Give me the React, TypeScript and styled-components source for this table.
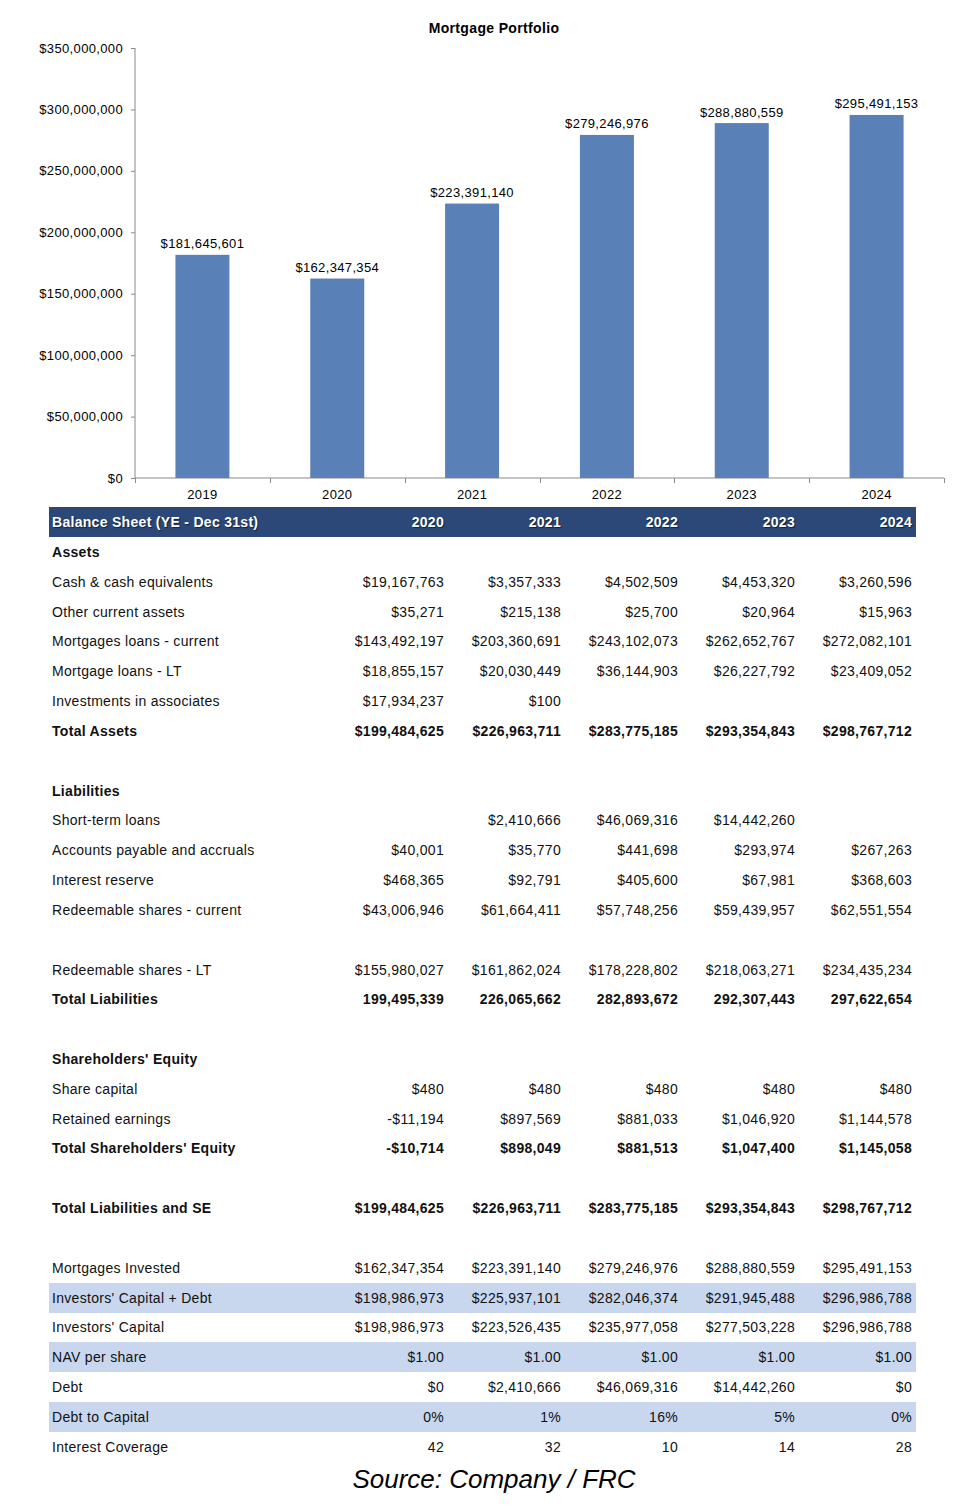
import React from 'react'
import styled, { createGlobalStyle } from 'styled-components'

const GlobalStyle = createGlobalStyle`
  body {
    margin: 0;
    background: #fff;
    font-family: Arial, "Liberation Sans", Helvetica, sans-serif;
    color: #000;
  }
`

const Page = styled.div`
  width: 960px;
  display: flex;
  flex-direction: column;
`

const ChartSvg = styled.svg`
  display: block;
  width: 960px;
  height: 507px;
  font-family: Arial, "Liberation Sans", sans-serif;
  letter-spacing: 0.35px;
`

const Table = styled.div`
  margin-left: 49px;
  width: 867px;
  display: flex;
  flex-direction: column;
`

const Row = styled.div<{ $bold?: boolean; $hl?: boolean }>`
  display: grid;
  grid-template-columns: 278px repeat(5, 117px);
  height: 29.83px;
  align-items: center;
  font-size: 14px;
  letter-spacing: 0.3px;
  font-weight: ${p => (p.$bold ? 700 : 400)};
  background: ${p => (p.$hl ? '#c8d7ee' : 'transparent')};
  color: #111;
`

const HeaderRow = styled(Row)`
  background: #2b4878;
  color: #fff;
  font-weight: 700;
  text-shadow: 1px 1px 1px rgba(0, 0, 0, 0.55);
  height: 30px;
`

const Label = styled.div`
  padding-left: 3px;
  white-space: nowrap;
`

const Value = styled.div`
  text-align: right;
  white-space: nowrap;
`

const Source = styled.div`
  height: 34px;
  line-height: 34px;
  padding-left: 28px;
  text-align: center;
  font-size: 26px;
  font-style: italic;
  color: #000;
`

const years = ['2019', '2020', '2021', '2022', '2023', '2024']
const portfolio = [181645601, 162347354, 223391140, 279246976, 288880559, 295491153]

const fmt = (n: number) => '$' + n.toLocaleString('en-US')

const AXIS_X = 135
const AXIS_RIGHT = 944
const BASE_Y = 478
const TOP_Y = 48
const MAX = 350000000
const CAT_W = (AXIS_RIGHT - AXIS_X) / 6
const BAR_W = 54

const yOf = (v: number) => BASE_Y - (v / MAX) * (BASE_Y - TOP_Y)

function PortfolioChart() {
  const ticks = [0, 50, 100, 150, 200, 250, 300, 350].map(m => m * 1000000)
  return (
    <ChartSvg viewBox="0 0 960 507">
      <text x={494} y={33} fontSize={14} fontWeight={700} textAnchor="middle">
        Mortgage Portfolio
      </text>
      <line x1={AXIS_X} y1={TOP_Y} x2={AXIS_X} y2={BASE_Y} stroke="#8a8a8a" strokeWidth={1} />
      <line x1={AXIS_X} y1={BASE_Y} x2={AXIS_RIGHT} y2={BASE_Y} stroke="#8a8a8a" strokeWidth={1} />
      {ticks.map(t => (
        <g key={t}>
          <line x1={AXIS_X - 4} y1={yOf(t) + 0.5} x2={AXIS_X} y2={yOf(t) + 0.5} stroke="#8a8a8a" />
          <text x={123} y={yOf(t) + 4.5} fontSize={13} textAnchor="end">
            {t === 0 ? '$0' : fmt(t)}
          </text>
        </g>
      ))}
      {Array.from({ length: 7 }).map((_, i) => (
        <line
          key={i}
          x1={Math.round(AXIS_X + i * CAT_W) + 0.5}
          y1={BASE_Y}
          x2={Math.round(AXIS_X + i * CAT_W) + 0.5}
          y2={BASE_Y + 5}
          stroke="#8a8a8a"
        />
      ))}
      {portfolio.map((v, i) => {
        const cx = AXIS_X + CAT_W * (i + 0.5)
        const top = yOf(v)
        return (
          <g key={years[i]}>
            <rect x={cx - BAR_W / 2} y={top} width={BAR_W} height={BASE_Y - top} fill="#5a80b8" />
            <text x={cx} y={top - 6.5} fontSize={13} textAnchor="middle">
              {fmt(v)}
            </text>
            <text x={cx} y={498.5} fontSize={13} textAnchor="middle">
              {years[i]}
            </text>
          </g>
        )
      })}
    </ChartSvg>
  )
}

type Line = { label?: string; values?: string[]; bold?: boolean; hl?: boolean }

const rows: Line[] = [
  { label: 'Assets', bold: true },
  { label: 'Cash & cash equivalents', values: ['$19,167,763', '$3,357,333', '$4,502,509', '$4,453,320', '$3,260,596'] },
  { label: 'Other current assets', values: ['$35,271', '$215,138', '$25,700', '$20,964', '$15,963'] },
  { label: 'Mortgages loans - current', values: ['$143,492,197', '$203,360,691', '$243,102,073', '$262,652,767', '$272,082,101'] },
  { label: 'Mortgage loans - LT', values: ['$18,855,157', '$20,030,449', '$36,144,903', '$26,227,792', '$23,409,052'] },
  { label: 'Investments in associates', values: ['$17,934,237', '$100', '', '', ''] },
  { label: 'Total Assets', bold: true, values: ['$199,484,625', '$226,963,711', '$283,775,185', '$293,354,843', '$298,767,712'] },
  {},
  { label: 'Liabilities', bold: true },
  { label: 'Short-term loans', values: ['', '$2,410,666', '$46,069,316', '$14,442,260', ''] },
  { label: 'Accounts payable and accruals', values: ['$40,001', '$35,770', '$441,698', '$293,974', '$267,263'] },
  { label: 'Interest reserve', values: ['$468,365', '$92,791', '$405,600', '$67,981', '$368,603'] },
  { label: 'Redeemable shares - current', values: ['$43,006,946', '$61,664,411', '$57,748,256', '$59,439,957', '$62,551,554'] },
  {},
  { label: 'Redeemable shares - LT', values: ['$155,980,027', '$161,862,024', '$178,228,802', '$218,063,271', '$234,435,234'] },
  { label: 'Total Liabilities', bold: true, values: ['199,495,339', '226,065,662', '282,893,672', '292,307,443', '297,622,654'] },
  {},
  { label: "Shareholders' Equity", bold: true },
  { label: 'Share capital', values: ['$480', '$480', '$480', '$480', '$480'] },
  { label: 'Retained earnings', values: ['-$11,194', '$897,569', '$881,033', '$1,046,920', '$1,144,578'] },
  { label: "Total Shareholders' Equity", bold: true, values: ['-$10,714', '$898,049', '$881,513', '$1,047,400', '$1,145,058'] },
  {},
  { label: 'Total Liabilities and SE', bold: true, values: ['$199,484,625', '$226,963,711', '$283,775,185', '$293,354,843', '$298,767,712'] },
  {},
  { label: 'Mortgages Invested', values: ['$162,347,354', '$223,391,140', '$279,246,976', '$288,880,559', '$295,491,153'] },
  { label: "Investors' Capital + Debt", hl: true, values: ['$198,986,973', '$225,937,101', '$282,046,374', '$291,945,488', '$296,986,788'] },
  { label: "Investors' Capital", values: ['$198,986,973', '$223,526,435', '$235,977,058', '$277,503,228', '$296,986,788'] },
  { label: 'NAV per share', hl: true, values: ['$1.00', '$1.00', '$1.00', '$1.00', '$1.00'] },
  { label: 'Debt', values: ['$0', '$2,410,666', '$46,069,316', '$14,442,260', '$0'] },
  { label: 'Debt to Capital', hl: true, values: ['0%', '1%', '16%', '5%', '0%'] },
  { label: 'Interest Coverage', values: ['42', '32', '10', '14', '28'] },
]

function BalanceSheet() {
  return (
    <Table>
      <HeaderRow>
        <Label>Balance Sheet (YE - Dec 31st)</Label>
        {['2020', '2021', '2022', '2023', '2024'].map(y => (
          <Value key={y}>{y}</Value>
        ))}
      </HeaderRow>
      {rows.map((r, i) => (
        <Row key={i} $bold={r.bold} $hl={r.hl}>
          <Label>{r.label}</Label>
          {(r.values || ['', '', '', '', '']).map((v, j) => (
            <Value key={j}>{v}</Value>
          ))}
        </Row>
      ))}
    </Table>
  )
}

export default function App() {
  return (
    <Page>
      <GlobalStyle />
      <PortfolioChart />
      <BalanceSheet />
      <Source>Source: Company / FRC</Source>
    </Page>
  )
}
